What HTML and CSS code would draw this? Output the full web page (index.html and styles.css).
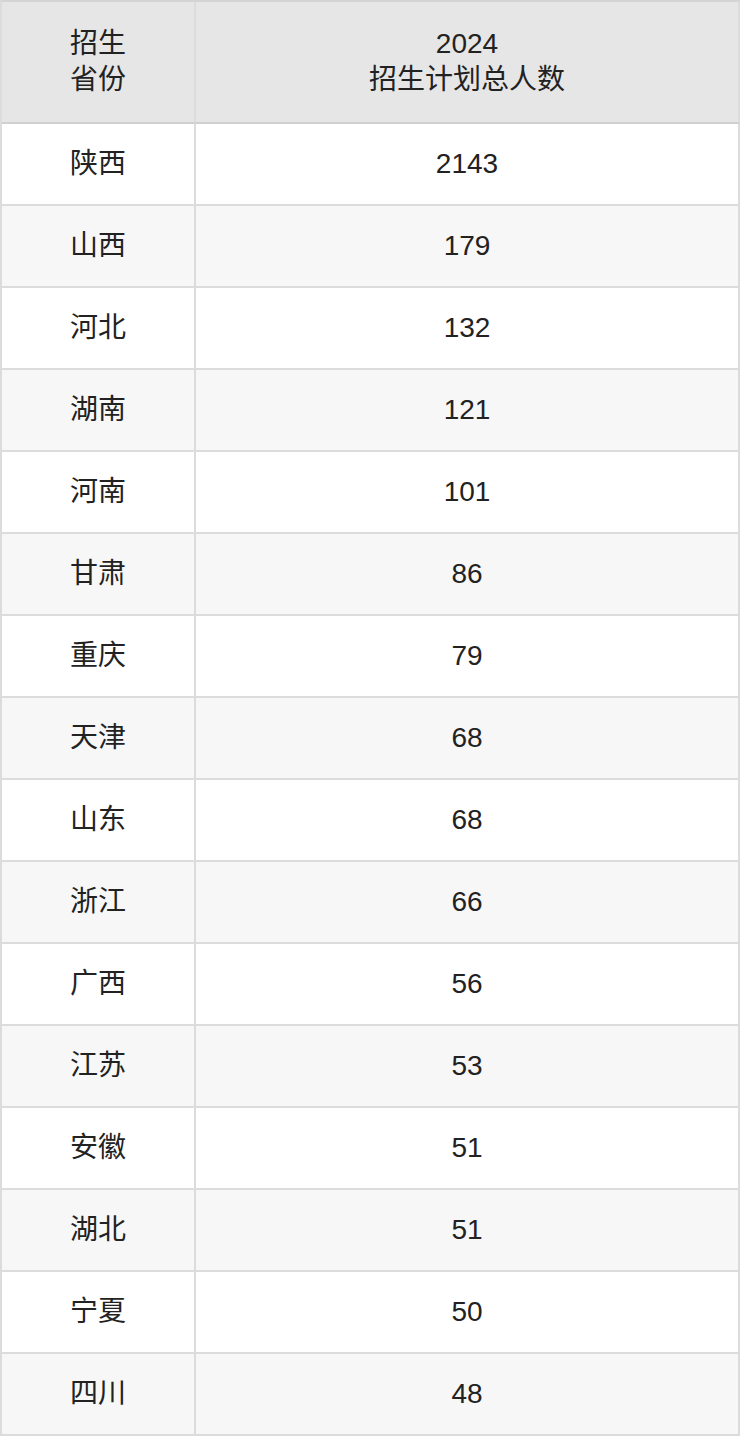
FILE: index.html
```html
<!DOCTYPE html>
<html lang="zh-CN">
<head>
<meta charset="utf-8">
<title>招生计划</title>
<link rel="stylesheet" href="styles.css">
</head>
<body>
<table class="plan">
  <thead>
    <tr>
      <th class="col-prov">招生<br>省份</th>
      <th class="col-num">2024<br>招生计划总人数</th>
    </tr>
  </thead>
  <tbody>
    <tr><td>陕西</td><td>2143</td></tr>
    <tr><td>山西</td><td>179</td></tr>
    <tr><td>河北</td><td>132</td></tr>
    <tr><td>湖南</td><td>121</td></tr>
    <tr><td>河南</td><td>101</td></tr>
    <tr><td>甘肃</td><td>86</td></tr>
    <tr><td>重庆</td><td>79</td></tr>
    <tr><td>天津</td><td>68</td></tr>
    <tr><td>山东</td><td>68</td></tr>
    <tr><td>浙江</td><td>66</td></tr>
    <tr><td>广西</td><td>56</td></tr>
    <tr><td>江苏</td><td>53</td></tr>
    <tr><td>安徽</td><td>51</td></tr>
    <tr><td>湖北</td><td>51</td></tr>
    <tr><td>宁夏</td><td>50</td></tr>
    <tr><td>四川</td><td>48</td></tr>
  </tbody>
</table>
</body>
</html>
```
FILE: styles.css
```css
html, body {
  margin: 0;
  padding: 0;
  background: #ffffff;
}

.plan {
  width: 740px;
  table-layout: fixed;
  border-collapse: separate;
  border-spacing: 0;
  border-top: 2px solid #d4d4d4;
  border-left: 2px solid #dcdcdc;
  font-family: "Liberation Sans", "Noto Sans CJK SC", sans-serif;
  font-size: 28px;
  line-height: 36px;
  color: #222222;
}

.plan th,
.plan td {
  padding: 0;
  text-align: center;
  vertical-align: middle;
  border-right: 2px solid #dcdcdc;
  border-bottom: 2px solid #dcdcdc;
  font-weight: normal;
}

.plan th {
  height: 120px;
  background: #e6e6e6;
  border-bottom-color: #d0d0d0;
}

.plan .col-prov {
  width: 194px;
  box-sizing: border-box;
}

.plan td {
  height: 80px;
}

.plan tbody tr:nth-child(even) td {
  background: #f7f7f7;
}
```
